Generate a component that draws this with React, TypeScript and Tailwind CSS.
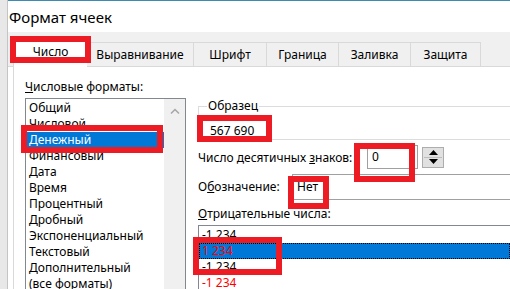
import React from 'react'

const FORMATS = [
  'Общий',
  'Числовой',
  'Денежный',
  'Финансовый',
  'Дата',
  'Время',
  'Процентный',
  'Дробный',
  'Экспоненциальный',
  'Текстовый',
  'Дополнительный',
  '(все форматы)',
]

const TABS = [
  { label: 'Число', w: 'w-[74px]' },
  { label: 'Выравнивание', w: 'w-[107px]' },
  { label: 'Шрифт', w: 'w-[73px]' },
  { label: 'Граница', w: 'w-[72px]' },
  { label: 'Заливка', w: 'w-[72px]' },
  { label: 'Защита', w: 'w-[70px]' },
]

const NEGATIVES = [
  { text: '-1 234', red: false },
  { text: '1 234', red: true },
  { text: '-1 234', red: false },
  { text: '-1 234', red: true },
]

// red annotation frames drawn over the dialog
function RedBox({ className }: { className: string }) {
  return <div className={'pointer-events-none absolute border-[6px] border-[#ed1c24] ' + className} />
}

function Spin() {
  return (
    <div className="flex h-[21px] w-[22px] flex-col border border-[#adadad] bg-[#e1e1e1] p-px">
      <div className="flex flex-1 items-center justify-center border-b border-[#bdbdbd]">
        <svg width="9" height="5" viewBox="0 0 9 5">
          <path d="M0 5 L4.5 0 L9 5 Z" fill="#000" />
        </svg>
      </div>
      <div className="flex flex-1 items-center justify-center">
        <svg width="9" height="5" viewBox="0 0 9 5">
          <path d="M0 0 L4.5 5 L9 0 Z" fill="#000" />
        </svg>
      </div>
    </div>
  )
}

export default function App() {
  return (
    <div className="relative flex h-[289px] w-[510px] overflow-hidden bg-white font-['Noto_Sans',sans-serif] text-[12px] leading-[16px] text-black">
      {/* sheet behind the dialog */}
      <div className="w-[8px] shrink-0 border-r border-[#c4c4c4] bg-[#e8e8e8]" />

      <div className="flex min-w-0 flex-1 flex-col border-t border-[#3b8bb3]">
        <div className="h-[31px] shrink-0 pl-[1px] pt-[6px] text-[15px] leading-[20px]">Формат ячеек</div>

        {/* tabs */}
        <div className="flex h-[35px] shrink-0 items-end border-b border-[#d9d9d9] bg-[#f0f0f0] pl-[5px]">
          {TABS.map((t, i) =>
            i === 0 ? (
              <div
                key={t.label}
                className={'-mb-px flex h-[29px] items-center justify-center border-l border-t border-[#d9d9d9] bg-white pb-[2px] ' + t.w}
              >
                {t.label}
              </div>
            ) : (
              <div
                key={t.label}
                className={'flex h-[24px] items-center justify-center border-r border-t border-[#d9d9d9] ' + t.w}
              >
                {t.label}
              </div>
            ),
          )}
        </div>

        {/* page */}
        <div className="ml-[5px] flex min-h-0 flex-1 gap-[12px] border-l border-[#d9d9d9] pl-[11px]">
          <div className="flex w-[161px] shrink-0 flex-col pt-[12px]">
            <div>
              <span className="underline">Ч</span>исловые форматы:
            </div>
            <div className="mt-[3px] flex flex-1 border border-b-0 border-[#828790]">
              <div className="flex-1 pt-px">
                {FORMATS.map((f) => (
                  <div
                    key={f}
                    className={f === 'Денежный' ? 'bg-[#0078d7] pl-[3px] text-white' : 'pl-[3px]'}
                  >
                    {f}
                  </div>
                ))}
              </div>
              <div className="flex w-[21px] justify-center bg-[#f0f0f0] pt-[9px]">
                <svg width="10" height="6" viewBox="0 0 10 6">
                  <path d="M1 5.5 L5 1.5 L9 5.5" fill="none" stroke="#a6a6a6" strokeWidth="1.5" />
                </svg>
              </div>
            </div>
          </div>

          <div className="flex min-w-0 flex-1 flex-col pt-[31px]">
            <fieldset className="h-[45px] border border-r-0 border-[#dcdcdc] pl-[11px]">
              <legend className="-ml-[3px] px-px">Образец</legend>
              <div className="pt-[9px]">567 690</div>
            </fieldset>

            <div className="mt-[5px] flex h-[24px] items-center">
              <div className="w-[169px] shrink-0 pt-[2px]">
                Число десятичных <span className="underline">з</span>наков:
              </div>
              <div className="flex h-[24px] w-[51px] items-center border border-[#a0a0a0] pl-[4px]">0</div>
              <div className="ml-[4px]">
                <Spin />
              </div>
            </div>

            <div className="mt-[5px] flex h-[26px] items-center">
              <div className="w-[94px] shrink-0">
                О<span className="underline">б</span>означение:
              </div>
              <div className="flex h-[26px] flex-1 items-center border border-r-0 border-[#a0a0a0] pl-[4px]">Нет</div>
            </div>

            <div className="mt-[6px]">
              <span className="underline">О</span>трицательные числа:
            </div>
            <div className="mt-[3px] flex-1 border border-b-0 border-r-0 border-[#828790] pt-px">
              {NEGATIVES.map((n, i) => (
                <div
                  key={i}
                  className={
                    i === 1
                      ? 'bg-[#0078d7] pl-[3px] text-[#ff0000] outline-1 -outline-offset-1 outline-dotted outline-black'
                      : n.red
                        ? 'pl-[3px] text-[#ff0000]'
                        : 'pl-[3px]'
                  }
                >
                  {n.text}
                </div>
              ))}
            </div>
          </div>
        </div>
      </div>

      <RedBox className="left-[10px] top-[36px] h-[27px] w-[81px]" />
      <RedBox className="left-[21px] top-[125px] h-[28px] w-[142px]" />
      <RedBox className="left-[197px] top-[115px] h-[27px] w-[75px]" />
      <RedBox className="left-[354px] top-[143px] h-[39px] w-[61px]" />
      <RedBox className="left-[288px] top-[176px] h-[33px] w-[41px]" />
      <RedBox className="left-[193px] top-[237px] h-[38px] w-[89px]" />
    </div>
  )
}
